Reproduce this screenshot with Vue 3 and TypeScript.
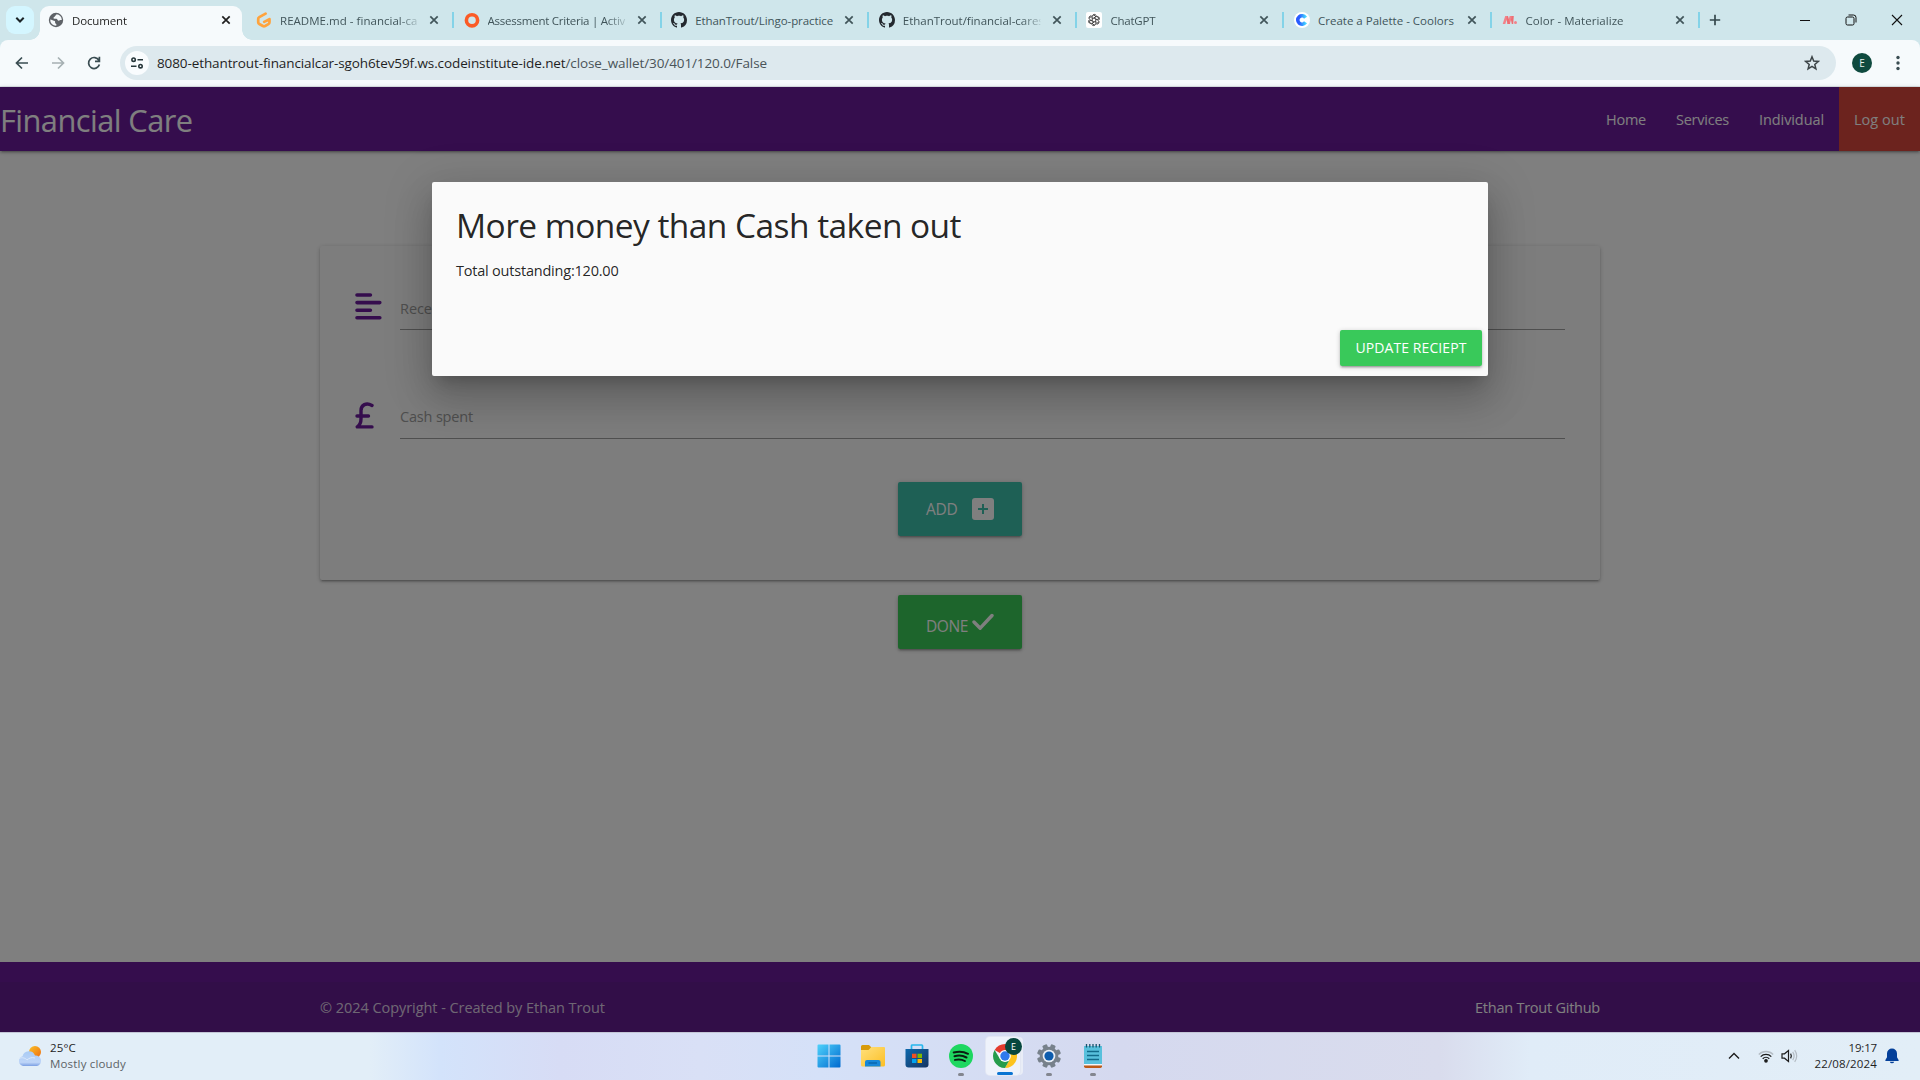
<script setup lang="ts">
import type { Directive } from 'vue'

interface Tab {
  title: string
  icon: string
  width: number
}

const tabs: Tab[] = [
  { title: 'Document', icon: 'globe', width: 55 },
  { title: 'README.md - financial-ca', icon: 'gitpod', width: 137.5 },
  { title: 'Assessment Criteria | Activ', icon: 'ring', width: 137.5 },
  { title: 'EthanTrout/Lingo-practice', icon: 'github', width: 138 },
  { title: 'EthanTrout/financial-cares', icon: 'github', width: 141 },
  { title: 'ChatGPT', icon: 'gpt', width: 45 },
  { title: 'Create a Palette - Coolors', icon: 'coolors', width: 136 },
  { title: 'Color - Materialize', icon: 'materialize', width: 98 },
]

const links = [
  { label: 'Home', width: 40 },
  { label: 'Services', width: 53 },
  { label: 'Individual', width: 65 },
  { label: 'Log out', width: 51 },
]

const petals = [0, 60, 120, 180, 240, 300]
const teeth = [22.5, 67.5, 112.5, 157.5, 202.5, 247.5, 292.5, 337.5]

// Tracks a label so that it spans the given number of pixels.
const vFit: Directive<HTMLElement, number> = {
  mounted(el, { value }) {
    const natural = el.getBoundingClientRect().width
    const count = (el.textContent ?? '').trim().length
    el.style.letterSpacing = `${(value - natural) / count}px`
  },
}
</script>

<template>
  <div class="screen">
    <header class="tabstrip">
      <div class="tab-search">
        <svg width="10" height="8" viewBox="0 0 10 8"><path d="M1.3 1.8 5 5.5 8.700 1.800" fill="none" stroke="#1b2528" stroke-width="2" /></svg>
      </div>
      <div class="tabs">
        <div v-for="(tab, i) in tabs" :key="i" class="tab" :class="{ active: i === 0, divided: i > 0 }">
          <svg v-if="tab.icon === 'globe'" class="fav" viewBox="0 0 16 16">
            <circle cx="8" cy="8" r="7.2" fill="#5f6368" />
            <path d="M8.5 2.2c-.2 1.300-1.500 1-1.600 2.100-.1.900-1.500.7-1.500 1.700 0 .9 1.800.6 2.900.8 1.300.2 1 1.700 2.200 1.900 1.200.1 1.300-.9 3.300-.7A5.800 5.800 0 0 0 8.500 2.200ZM2.200 7.500c1.400.1 2.400 1 3.800 1.200 1.400.2 1.100 1.200 1.100 2.100 0 1 1.400.8 1.300 1.800l-.2 1.200A5.900 5.900 0 0 1 2.200 7.500Z" fill="#f6fafc" />
          </svg>
          <svg v-else-if="tab.icon === 'gitpod'" class="fav" viewBox="0 0 16 16">
            <path d="M9.600 1.600 3.300 5.100Q2.200 5.700 2.200 7v3.200q0 1.200 1.100 1.800l3.600 2q1.100.6 2.200 0l3.300-1.900q1.100-.6 1.100-1.800V7.200L8.200 9.900" fill="none" stroke="#ffa33c" stroke-width="2.700" stroke-linecap="round" stroke-linejoin="round" />
          </svg>
          <svg v-else-if="tab.icon === 'ring'" class="fav" viewBox="0 0 16 16"><circle cx="8" cy="8.300" r="5.600" fill="none" stroke="#fb5b26" stroke-width="3.600" /></svg>
          <svg v-else-if="tab.icon === 'github'" class="fav" viewBox="0 0 16 16">
            <path fill="#24292f" d="M8 0C3.580 0 0 3.580 0 8c0 3.540 2.290 6.530 5.470 7.590.4.070.55-.17.55-.38 0-.19-.01-.82-.01-1.490-2.010.37-2.530-.49-2.690-.94-.09-.23-.48-.94-.82-1.130-.28-.15-.68-.52-.01-.53.63-.01 1.080.58 1.230.82.72 1.210 1.870.87 2.330.66.070-.52.28-.87.51-1.070-1.780-.2-3.640-.89-3.640-3.950 0-.87.31-1.590.82-2.150-.08-.2-.36-1.020.08-2.120 0 0 .67-.21 2.200.82.64-.18 1.320-.27 2-.27s1.360.09 2 .27c1.530-1.040 2.200-.82 2.200-.82.44 1.100.16 1.920.08 2.120.51.56.82 1.270.82 2.150 0 3.070-1.870 3.750-3.650 3.950.29.25.54.73.54 1.480 0 1.070-.01 1.930-.01 2.200 0 .21.15.46.55.38A8.010 8.010 0 0 0 16 8c0-4.420-3.580-8-8-8Z" />
          </svg>
          <svg v-else-if="tab.icon === 'gpt'" class="fav" viewBox="0 0 16 16">
            <rect width="16" height="16" rx="2" fill="#fff" />
            <g fill="none" stroke="#222" stroke-width=".8">
              <path v-for="a in petals" :key="a" :transform="`rotate(${a} 8 8)`" d="M6.200 9.100V4.600c0-1.200 1-2.200 2.200-2.200.8 0 1.600.4 2 1.200M6.200 4.900a2.300 2.300 0 0 0-2.800 1.300" />
            </g>
          </svg>
          <svg v-else-if="tab.icon === 'coolors'" class="fav" viewBox="0 0 16 16">
            <defs><linearGradient id="coolors-fill" x1="0" x2="1"><stop offset=".2" stop-color="#2a5cff" /><stop offset="1" stop-color="#43d3ff" /></linearGradient></defs>
            <circle cx="8" cy="8" r="8" fill="#fff" />
            <path d="M11.500 5.700A4.200 4.200 0 1 0 11.500 10.300" fill="none" stroke="url(#coolors-fill)" stroke-width="3.600" />
          </svg>
          <svg v-else class="fav" viewBox="0 0 16 16">
            <path d="M3.200 4h2.600L3.300 12H.7ZM7.700 4h2.600L7.800 12H5.200Z" fill="#f2828a" />
            <path d="M5.200 4h.8l2.200 8H5.600L4.400 7.500ZM9.700 4h2.100l-.6 8H9.800L8.900 7.500Z" fill="#ee6e73" />
            <circle cx="13.500" cy="10.500" r="1.500" fill="#f2828a" />
          </svg>
          <div class="tab-title"><span v-fit="tab.width">{{ tab.title }}</span></div>
          <svg class="tab-close" viewBox="0 0 10 10"><path d="m1.300 1.300 7.400 7.400m0-7.400L1.300 8.700" stroke="currentColor" stroke-width="1.700" /></svg>
        </div>
      </div>
      <svg class="new-tab" viewBox="0 0 12 12"><path d="M6 .8v10.400M.8 6h10.400" stroke="#35484d" stroke-width="1.700" /></svg>
      <div class="window-controls">
        <svg viewBox="0 0 12 12"><path d="M1 6.500h10" stroke="#111" /></svg>
        <svg viewBox="0 0 12 12" fill="none" stroke="#111"><rect x="1" y="3" width="8" height="8" rx="1.500" /><path d="M3.500 1h5Q11 1 11 3.500v5" /></svg>
        <svg viewBox="0 0 12 12"><path d="m1 1 10 10M11 1 1 11" stroke="#111" stroke-width="1.100" /></svg>
      </div>
    </header>

    <div class="toolbar-wrap">
      <div class="toolbar">
        <svg class="tool" viewBox="0 0 16 16" fill="none" stroke="#3a4d52" stroke-width="1.700"><path d="M14 8H3M8 2.500 2.500 8 8 13.500" /></svg>
        <svg class="tool" viewBox="0 0 16 16" fill="none" stroke="#a6b0b3" stroke-width="1.700"><path d="M2 8h11M8 2.500 13.500 8 8 13.500" /></svg>
        <svg class="tool" viewBox="0 0 16 16" fill="none" stroke="#3a4d52" stroke-width="1.700"><path d="M12.900 5.300A5.500 5.500 0 1 0 13.400 9.500M13.400 1.800v4.500H9" /></svg>
        <div class="omnibox">
          <div class="site-info">
            <svg width="14" height="14" viewBox="0 0 14 14" fill="none" stroke="#26363a" stroke-width="1.600"><circle cx="3.600" cy="3.700" r="1.700" /><path d="M7.500 3.700H13M1 10.200h5.500" /><circle cx="10.500" cy="10.200" r="1.700" /></svg>
          </div>
          <span class="url"><span v-fit="408.500">8080-ethantrout-financialcar-sgoh6tev59f.ws.codeinstitute-ide.net</span><span v-fit="201.500" class="path">/close_wallet/30/401/120.0/False</span></span>
          <svg class="star" viewBox="0 0 16 16"><path d="m8 1.800 1.700 4.300 4.600.3-3.500 3 1.100 4.500L8 11.400l-3.900 2.500 1.100-4.500-3.500-3 4.600-.3Z" fill="none" stroke="#3d4548" stroke-width="1.500" /></svg>
        </div>
        <div class="profile">E</div>
        <svg class="menu" viewBox="0 0 4 16" fill="#3a4d52"><circle cx="2" cy="2.500" r="1.700" /><circle cx="2" cy="8" r="1.700" /><circle cx="2" cy="13.500" r="1.700" /></svg>
      </div>
    </div>

    <div class="page">
      <nav class="nav">
        <a class="brand"><span v-fit="192.500">Financial Care</span></a>
        <a v-for="l in links" :key="l.label" class="nav-link" :class="{ logout: l.label === 'Log out' }"><span v-fit="l.width">{{ l.label }}</span></a>
      </nav>

      <main class="main">
        <section class="card">
          <div class="field">
            <svg class="align" width="27" height="27" viewBox="0 0 27 27" stroke="#6a1b9a" stroke-width="3.600" stroke-linecap="round"><path d="M2 2h13.400M2 9.600h22.800M2 17.200h13.400M2 24.700h22.800" /></svg>
            <div class="input"><span v-fit="107">Receipt number</span></div>
          </div>
          <div class="field">
            <svg class="pound" width="27" height="27" viewBox="0 0 27 27" fill="none" stroke="#6a1b9a" stroke-width="3.400" stroke-linecap="round" stroke-linejoin="round"><path d="M17 3.400C11.300.2 6 2.800 6 8.500v8.200c0 3-1 6.300-3.700 8.200H17M2 14h11.500" /></svg>
            <div class="input"><span v-fit="73">Cash spent</span></div>
          </div>
          <button class="big-btn teal">
            <span v-fit="31.500">ADD</span>
            <svg class="plus" viewBox="0 0 22 22"><rect width="22" height="22" rx="3" fill="#fff" /><path d="M11 6v10M6 11h10" stroke="#3dc0ab" stroke-width="2" /></svg>
          </button>
        </section>
        <button class="big-btn green">
          <span v-fit="42" class="low">DONE</span>
          <svg class="check" viewBox="0 0 22 18"><path d="m2 9 6.200 6.200L20 2.500" fill="none" stroke="#fff" stroke-width="3.400" stroke-linecap="round" stroke-linejoin="round" /></svg>
        </button>
      </main>

      <footer class="footer">
        <div class="copyright">
          <span v-fit="285">© 2024 Copyright - Created by Ethan Trout</span>
          <a><span v-fit="125">Ethan Trout Github</span></a>
        </div>
      </footer>

      <div class="overlay"></div>
      <div class="modal">
        <div class="modal-content">
          <h4><span v-fit="505">More money than Cash taken out</span></h4>
          <p><span v-fit="162.500">Total outstanding:120.00</span></p>
        </div>
        <div class="modal-footer">
          <button class="update"><span v-fit="111">UPDATE RECIEPT</span></button>
        </div>
      </div>
    </div>

    <div class="taskbar">
      <div class="weather">
        <svg width="24" height="20" viewBox="0 0 24 20">
          <defs>
            <linearGradient id="sun" x1="0" y1="0" x2="1" y2="1"><stop offset="0" stop-color="#f9c22b" /><stop offset="1" stop-color="#ef6a0c" /></linearGradient>
            <linearGradient id="cloud" x1="0" y1="0" x2="0" y2="1"><stop offset="0" stop-color="#a9cbf4" /><stop offset=".75" stop-color="#bed5f8" /><stop offset="1" stop-color="#7b9fe3" /></linearGradient>
          </defs>
          <circle cx="17" cy="6" r="6" fill="url(#sun)" />
          <path d="M5 20a5 5 0 0 1-.5-9.700A6.500 6.500 0 0 1 17 9.600 5.300 5.300 0 0 1 19 20Z" fill="url(#cloud)" />
          <path d="M1 12.500c3-1.500 6.500-.5 8 1.500 2-2 5-3 8-2" fill="none" stroke="#dceafc" />
        </svg>
        <div class="weather-text"><div><span v-fit="26">25°C</span></div><div class="muted"><span v-fit="76">Mostly cloudy</span></div></div>
      </div>

      <div class="apps">
        <div class="app">
          <svg viewBox="0 0 24 24"><defs><linearGradient id="win" x1="0" y1="0" x2="1" y2="1"><stop offset="0" stop-color="#4fd2fb" /><stop offset="1" stop-color="#0069cf" /></linearGradient></defs><path d="M.5 1.500q0-1 1-1h10v11H.5ZM12.500.5h10q1 0 1 1v10h-11ZM.5 12.500h11v11h-10q-1 0-1-1ZM12.500 12.500h11v10q0 1-1 1h-10Z" fill="url(#win)" /></svg>
        </div>
        <div class="app">
          <svg viewBox="0 0 24 24"><defs><linearGradient id="folder" x1="0" y1="0" x2="1" y2="1"><stop offset="0" stop-color="#ffe07d" /><stop offset="1" stop-color="#fcbf24" /></linearGradient></defs><path d="M0 2.500Q0 1 1.500 1H8l2.500 2.500L8 7H0Z" fill="#d89b0b" /><path d="M0 6h7.500l3-3H23q1 0 1 1v17q0 1.500-1.500 1.500h-21Q0 22.500 0 21Z" fill="url(#folder)" /><path d="M4 22.500V18q0-2 2-2h11.500q2 0 2 2v4.500Z" fill="#1687d8" /><path d="M7.500 19h8.500" stroke="#0865ac" stroke-width="1.400" /></svg>
        </div>
        <div class="app">
          <svg viewBox="0 0 24 24"><defs><linearGradient id="store" x1="0" y1="0" x2="1" y2="1"><stop offset="0" stop-color="#0d69ad" /><stop offset="1" stop-color="#173461" /></linearGradient></defs><path d="M6.500 5.500V1.800q0-.8.8-.8h9.400q.8 0 .8.800v3.700" fill="none" stroke="#27b7ed" stroke-width="1.700" /><path d="M.5 5h23v15.500q0 3-3 3h-17q-3 0-3-3Z" fill="url(#store)" /><path fill="#f25022" d="M7 9.700h4.500v4.300H7z" /><path fill="#7fba00" d="M12.500 9.700H17v4.300h-4.500z" /><path fill="#00a4ef" d="M7 15h4.500v4H7z" /><path fill="#ffb900" d="M12.500 15H17v4h-4.500z" /></svg>
        </div>
        <div class="app dot">
          <svg viewBox="0 0 24 24"><circle cx="12" cy="12" r="12" fill="#1ed760" /><path d="M4.700 8.500c5-1.400 10.300-.9 14.300 1.300M5.500 12.300c4.200-1.200 8.500-.7 12 1.200M6 15.900c3.500-.9 6.900-.6 9.900 1.100" fill="none" stroke="#0b1d12" stroke-width="2" stroke-linecap="round" /></svg>
        </div>
        <div class="app chrome">
          <svg viewBox="0 0 24 24"><path d="M12 12 1.610 6A12 12 0 0 1 22.390 6Z" fill="#e33b2e" /><path d="M12 6.300h10.600A12 12 0 0 1 12 24l5-9Z" fill="#fcc31e" /><path d="M17 15 12 24A12 12 0 0 1 1.610 6L7 15Z" fill="#269c4b" /><circle cx="12" cy="12" r="5.900" fill="#fff" /><circle cx="12" cy="12" r="4.700" fill="#2f7aee" /></svg>
          <span class="chrome-badge">E</span>
        </div>
        <div class="app dot">
          <svg viewBox="0 0 24 24"><g fill="#77818b"><circle cx="12" cy="12" r="9.300" /><rect v-for="a in teeth" :key="a" x="9.500" y="0" width="5" height="6" rx="1.200" :transform="`rotate(${a} 12 12)`" /></g><circle cx="12" cy="12" r="6.300" fill="#e8eef6" /><circle cx="12" cy="12" r="4.600" fill="#0c5cad" /></svg>
        </div>
        <div class="app dot">
          <svg viewBox="0 0 24 24"><path d="M3 2h18v18H3z" fill="#58c0dc" /><path d="M3 20h18v1.500H3z" fill="#f6f6f6" /><path d="M3 21.500h18v.8q0 1.700-1.700 1.700H4.700Q3 24 3 22.300Z" fill="#bd5a16" /><path d="M5.500 0v3.500M8.800 0v3.500M12 0v3.500M15.200 0v3.500M18.500 0v3.500" stroke="#17536c" stroke-width="1.300" /><path d="M6 7.500h12M6 11.500h12M6 15.500h12" stroke="#126b8b" stroke-width="1.500" /></svg>
        </div>
      </div>

      <div class="tray">
        <svg class="chev" viewBox="0 0 12 8"><path d="m1 6.500 5-5 5 5" fill="none" stroke="#1c1c1c" stroke-width="1.400" /></svg>
        <svg class="wifi" viewBox="0 0 16 14" fill="none" stroke="#1c1c1c" stroke-width="1.300"><path d="M.8 5.500a10.200 10.200 0 0 1 14.400 0" stroke="#b4bcc4" /><path d="M2.700 7.600a7.500 7.500 0 0 1 10.600 0M4.700 9.700a4.700 4.700 0 0 1 6.600 0" /><circle cx="8" cy="11.800" r="1.200" fill="#1c1c1c" /></svg>
        <svg class="sound" viewBox="0 0 17 14" fill="none" stroke="#1c1c1c" stroke-width="1.200"><path d="M1 4.800h2.500L7.500 1.500v11L3.500 9.200H1Z" /><path d="M9.600 4.600q1.500 2.400 0 4.800" /><path d="M11.700 2.800q2.800 4.200 0 8.400M13.700 1.200q4 5.800 0 11.600" stroke="#b4bcc4" /></svg>
        <div class="clock"><div><span v-fit="28.500">19:17</span></div><div><span v-fit="62.500">22/08/2024</span></div></div>
        <svg class="bell" viewBox="0 0 14 16"><path d="M7 .5a5 5 0 0 0-5 5v3.700L.4 12v1h13.200v-1L12 9.200V5.500a5 5 0 0 0-5-5ZM4.800 13.700h4.400a2.300 2.300 0 0 1-4.400 0Z" fill="#04409a" /></svg>
      </div>
    </div>
  </div>
</template>

<style>
body {
  margin: 0;
  overflow: hidden;
}
</style>

<style scoped>
* {
  box-sizing: border-box;
}

.screen {
  width: 1920px;
  height: 1080px;
  display: flex;
  flex-direction: column;
  font-family: "Open Sans", "Noto Sans", sans-serif;
  color: #1f1f1f;
  overflow: hidden;
}

svg {
  display: block;
  flex: none;
}

span {
  white-space: nowrap;
}

button {
  border: 0;
  font-family: inherit;
}

/* browser tabs */
.tabstrip {
  flex: none;
  height: 40px;
  display: flex;
  background: #cfe6eb;
}

.tab-search {
  width: 28px;
  height: 28px;
  margin: 6px 6px 0;
  border-radius: 9px;
  background: #d4f6ff;
  display: flex;
  align-items: center;
  justify-content: center;
}

.tabs {
  display: flex;
}

.tab {
  position: relative;
  width: 207.600px;
  height: 34px;
  margin-top: 6px;
  padding: 0 0 6px 8px;
  display: flex;
  align-items: center;
  color: #41555a;
  font-size: 11.500px;
}

.tab.active {
  width: 202px;
  margin-right: 6px;
  background: #f6fafc;
  border-radius: 9px 9px 0 0;
  color: #1f1f1f;
}

.tab.active::before,
.tab.active::after {
  content: "";
  position: absolute;
  bottom: 0;
  width: 10px;
  height: 10px;
}

.tab.active::before {
  left: -10px;
  background: radial-gradient(circle at 0 0, transparent 9.500px, #f6fafc 10px);
}

.tab.active::after {
  right: -10px;
  background: radial-gradient(circle at 100% 0, transparent 9.500px, #f6fafc 10px);
}

.tab.divided::after {
  content: "";
  position: absolute;
  left: 204px;
  top: 6px;
  width: 2px;
  height: 16px;
  background: #84d3e8;
}

.fav {
  width: 16px;
  height: 16px;
}

.tab-title {
  width: 140px;
  margin-left: 8px;
  padding-top: 1px;
  line-height: 20px;
  white-space: nowrap;
  -webkit-mask-image: linear-gradient(90deg, #000 118px, rgba(0, 0, 0, 0.300) 136px, transparent 138px);
  mask-image: linear-gradient(90deg, #000 118px, rgba(0, 0, 0, 0.300) 136px, transparent 138px);
}

.tab:nth-child(4) .tab-title,
.tab:nth-child(7) .tab-title {
  -webkit-mask-image: none;
  mask-image: none;
}

.tab-close {
  width: 10px;
  height: 10px;
  margin-left: 9px;
}

.new-tab {
  width: 12px;
  height: 12px;
  margin: 14px 0 0 7.500px;
}

.window-controls {
  margin: 14px 17px 0 auto;
  display: flex;
  gap: 34px;
}

.window-controls svg {
  width: 12px;
  height: 12px;
}

/* browser toolbar */
.toolbar-wrap {
  flex: none;
  background: #cfe6eb;
}

.toolbar {
  height: 47px;
  padding: 0 20px 1px 14px;
  border-bottom: 1px solid #dbe3e6;
  border-radius: 8px 8px 0 0;
  background: #f6fafc;
  display: flex;
  align-items: center;
}

.tool {
  width: 16px;
  height: 16px;
  margin-right: 20px;
}

.omnibox {
  width: 1716px;
  height: 34px;
  margin-left: -2px;
  padding: 0 16px 0 5px;
  border-radius: 17px;
  background: #dde9ee;
  display: flex;
  align-items: center;
}

.site-info {
  width: 24px;
  height: 24px;
  border-radius: 50%;
  background: #f9fcfe;
  display: flex;
  align-items: center;
  justify-content: center;
}

.url {
  display: flex;
  margin-left: 8px;
  font-size: 13.500px;
  line-height: 20px;
}

.path {
  color: #4a5458;
}

.star {
  width: 16px;
  height: 16px;
  margin-left: auto;
}

.profile {
  width: 20px;
  height: 20px;
  margin-left: 16px;
  border-radius: 50%;
  background: #0f4a3f;
  color: #e6f0ee;
  font: 10px/20px "Open Sans", sans-serif;
  text-align: center;
}

.menu {
  width: 4px;
  height: 16px;
  margin-left: auto;
}

/* web page */
.page {
  position: relative;
  flex: none;
  height: 945px;
  display: flex;
  flex-direction: column;
  background: #fff;
  font-size: 14.500px;
}

.nav {
  flex: none;
  height: 64px;
  display: flex;
  line-height: 66px;
  background: #6a1b9a;
  color: #fff;
  box-shadow: 0 2px 2px rgba(0, 0, 0, 0.140), 0 3px 1px -2px rgba(0, 0, 0, 0.120), 0 1px 5px rgba(0, 0, 0, 0.200);
}

.brand {
  margin-right: auto;
  font-size: 30.800px;
}

.nav-link {
  padding: 0 15px;
}

.logout {
  background: #d8463c;
}

.main {
  flex: 1;
  width: 1280px;
  margin: 95px auto 0;
  display: flex;
  flex-direction: column;
  align-items: center;
}

.card {
  width: 100%;
  height: 334px;
  padding: 38px 35px 0;
  border-radius: 2px;
  background: #fafafa;
  box-shadow: 0 2px 2px rgba(0, 0, 0, 0.140), 0 3px 1px -2px rgba(0, 0, 0, 0.120), 0 1px 5px rgba(0, 0, 0, 0.200);
  display: flex;
  flex-direction: column;
}

.field {
  display: flex;
  align-items: center;
  height: 46px;
  margin-bottom: 63px;
}

.field + .field {
  margin-bottom: 43px;
}

.align,
.pound {
  margin-bottom: 1px;
}

.input {
  flex: 1;
  height: 46px;
  margin-left: 18px;
  padding-top: 3px;
  border-bottom: 1px solid #9e9e9e;
  line-height: 43px;
  color: #9e9e9e;
}

.field + .field .input {
  padding-top: 2px;
}

.big-btn {
  width: 124px;
  height: 54px;
  padding: 0 28px;
  border-radius: 2px;
  display: flex;
  flex: none;
  align-items: center;
  align-self: center;
  justify-content: space-between;
  font-size: 15.500px;
  color: #fff;
  box-shadow: 0 2px 2px rgba(0, 0, 0, 0.140), 0 3px 1px -2px rgba(0, 0, 0, 0.120), 0 1px 5px rgba(0, 0, 0, 0.200);
}

.teal {
  background: #3dc0ab;
}

.green {
  margin-top: 15px;
  background: #3acb58;
}

.low {
  padding-top: 7px;
}

.plus {
  width: 22px;
  height: 22px;
}

.check {
  width: 22px;
  height: 18px;
}

.footer {
  flex: none;
  height: 70px;
  padding-top: 20px;
  background: #6a1b9a;
}

.copyright {
  height: 50px;
  padding: 0 320px;
  display: flex;
  justify-content: space-between;
  line-height: 52px;
  background: rgba(51, 51, 51, 0.080);
  color: rgba(255, 255, 255, 0.800);
}

.copyright a {
  color: #fff;
}

.overlay {
  position: absolute;
  inset: 0;
  background: rgba(0, 0, 0, 0.500);
}

.modal {
  position: absolute;
  top: 95px;
  left: 0;
  right: 0;
  width: 1056px;
  height: 194px;
  margin: 0 auto;
  border-radius: 2px;
  background: #fafafa;
  display: flex;
  flex-direction: column;
  justify-content: space-between;
  color: rgba(0, 0, 0, 0.870);
  box-shadow: 0 24px 38px 3px rgba(0, 0, 0, 0.140), 0 9px 46px 8px rgba(0, 0, 0, 0.120), 0 11px 15px -7px rgba(0, 0, 0, 0.200);
}

.modal-content {
  padding: 24px;
}

h4 {
  margin: 0 0 16px;
  font-size: 33.500px;
  line-height: 38px;
  font-weight: 400;
}

p {
  margin: 0;
  line-height: 22px;
}

.modal-footer {
  height: 56px;
  padding: 10px 6px;
  display: flex;
  justify-content: flex-end;
}

.update {
  width: 142px;
  height: 36px;
  padding: 0 0 2px;
  border-radius: 2px;
  background: #39c95a;
  color: #fff;
  font-size: 14px;
  font-weight: 500;
  box-shadow: 0 2px 2px rgba(0, 0, 0, 0.140), 0 3px 1px -2px rgba(0, 0, 0, 0.120), 0 1px 5px rgba(0, 0, 0, 0.200);
}

/* taskbar */
.taskbar {
  flex: none;
  height: 48px;
  padding: 0 21px 2px 18px;
  border-top: 1px solid #c3c6d6;
  display: grid;
  grid-template-columns: 1fr auto 1fr;
  align-items: center;
  background: linear-gradient(90deg, #e2eef8 0, #e2eef8 370px, #d3e3fb 440px, #d7dcf5 560px, #d9e0f6 700px, #d5e1f8 820px, #d5d9ef 1120px, #d9dced 1440px, #e0ecf8 1530px, #e2eef7 100%);
  font-size: 11.500px;
  line-height: 16px;
}

.weather,
.tray {
  display: flex;
  align-items: center;
}

.weather-text {
  margin-left: 8px;
}

.muted {
  color: #5c6266;
}

.apps {
  display: flex;
  gap: 4px;
  margin-left: 5px;
}

.app {
  position: relative;
  width: 40px;
  height: 40px;
  display: flex;
  align-items: center;
  justify-content: center;
}

.app svg {
  width: 24px;
  height: 24px;
}

.dot::after {
  content: "";
  position: absolute;
  left: 17px;
  bottom: 0;
  width: 6px;
  height: 3px;
  border-radius: 2px;
  background: #83868f;
}

.chrome::before {
  content: "";
  position: absolute;
  left: 1px;
  top: 1px;
  width: 34px;
  height: 38px;
  border-radius: 4px;
  background: #eef2fb;
  box-shadow: 0 0 0 1px #e3e7f3, 3px 0 0 #e9edf7;
}

.chrome::after {
  content: "";
  position: absolute;
  left: 12px;
  bottom: 1px;
  width: 16px;
  height: 3px;
  border-radius: 2px;
  background: #0a74d2;
}

.chrome svg {
  position: relative;
}

.chrome-badge {
  position: absolute;
  left: 20px;
  top: 2px;
  width: 17px;
  height: 17px;
  border-radius: 50%;
  background: #07483f;
  color: #fff;
  font-size: 9px;
  line-height: 17px;
  text-align: center;
}

.tray {
  justify-content: flex-end;
}

.chev {
  width: 12px;
  height: 8px;
  margin-right: 18px;
}

.wifi {
  width: 16px;
  height: 14px;
  margin-right: 7px;
}

.sound {
  width: 17px;
  height: 14px;
  margin-right: 17px;
}

.clock {
  text-align: right;
}

.bell {
  width: 14px;
  height: 16px;
  margin-left: 8px;
}
</style>
